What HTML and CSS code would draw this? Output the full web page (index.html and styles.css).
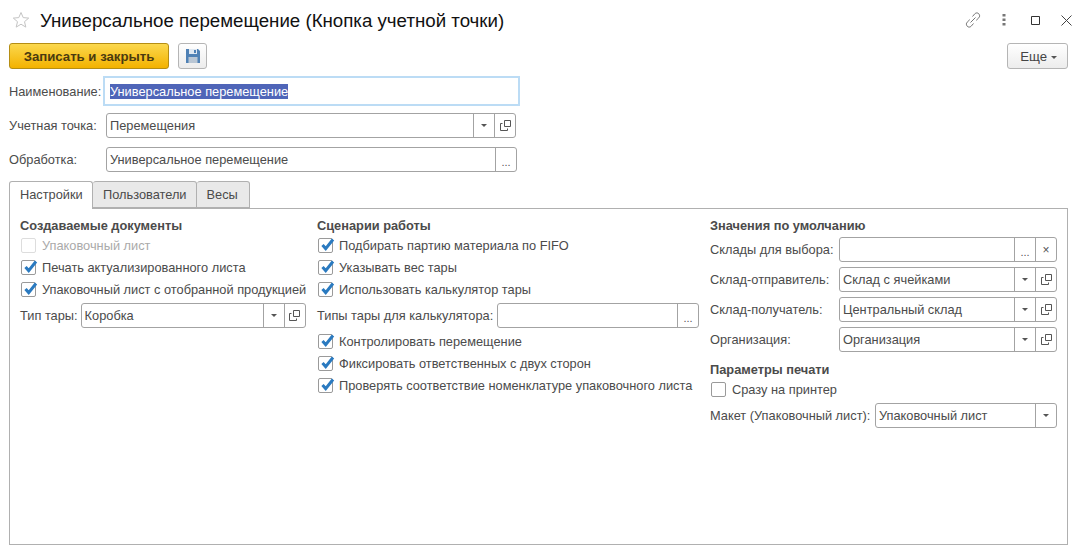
FILE: index.html
```html
<!DOCTYPE html>
<html>
<head>
<meta charset="utf-8">
<title>Универсальное перемещение</title>
<link rel="stylesheet" href="styles.css">
</head>
<body>
<svg class="icon-defs" width="0" height="0">
<symbol id="open" viewBox="0 0 11 11"><path d="M4.500 .5h6v6h-6z M2.500 3.500h-2v7h7v-2" fill="none" stroke="#555"/></symbol>
<symbol id="tick" viewBox="0 0 16 16"><path d="M3.500 8l3.200 3.600L14 2.500" fill="none" stroke="#2a7ac0" stroke-width="3"/></symbol>
</svg>
<div class="title-bar">
  <svg class="star" width="18" height="18" viewBox="0 0 18 18"><path d="M9 1.500l2.200 5.100 5.500.5-4.200 3.600 1.300 5.400L9 13.200l-4.800 2.900 1.300-5.400L1.300 7.100l5.500-.5z" fill="#fff" stroke="#c4c4c4"/></svg>
  <h1 class="title">Универсальное перемещение (Кнопка учетной точки)</h1>
  <div class="window-icons">
    <svg class="icon-link" width="16" height="16" viewBox="0 0 16 16"><path d="M5.500 10.500l5-5M7.500 4.500l2.300-2.700c1.200-1.200 3-1.200 4 0s1.200 2.900 0 4l-2.600 2.600M8.500 11.500l-2.300 2.700c-1.200 1.200-3 1.200-4 0s-1.200-2.900 0-4l2.600-2.600" fill="none" stroke="#777"/></svg>
    <svg class="icon-more" width="4" height="12" viewBox="0 0 4 12"><path d="M.5 0h3v2.500h-3zM.5 4.500h3V7h-3zM.5 9h3v2.500h-3z" fill="#777"/></svg>
    <svg class="icon-max" width="9" height="9" viewBox="0 0 9 9"><path d="M.5.500h8v8h-8z" fill="none" stroke="#333"/></svg>
    <svg class="icon-close" width="11" height="11" viewBox="0 0 11 11"><path d="M.5.500l10 10M10.500.500l-10 10" fill="none" stroke="#444"/></svg>
  </div>
</div>
<div class="toolbar">
  <button class="btn btn-primary">Записать и закрыть</button>
  <button class="btn btn-save">
    <svg width="14" height="14" viewBox="0 0 14 14"><path d="M0 0h12l2 2v12H0z" fill="#4f81b5"/><path d="M3 0h8v5H3z" fill="#dfe8f2"/><path d="M8 1h2v3H8z" fill="#4f81b5"/><path d="M2.500 8h9v6h-9z" fill="#b9c6d4"/></svg>
  </button>
  <button class="btn btn-more">Еще <span class="caret"></span></button>
</div>
<div class="row row-name">
  <label class="row-label">Наименование:</label>
  <div class="name-input"><span class="selected">Универсальное перемещение</span></div>
</div>
<div class="row row-point">
  <label class="row-label">Учетная точка:</label>
  <div class="field field-w410">
    <span class="field-text">Перемещения</span>
    <span class="field-btn"><span class="caret"></span></span>
    <span class="field-btn"><svg width="11" height="11"><use href="#open"/></svg></span>
  </div>
</div>
<div class="row row-proc">
  <label class="row-label">Обработка:</label>
  <div class="field field-w411">
    <span class="field-text">Универсальное перемещение</span>
    <span class="field-btn dots">...</span>
  </div>
</div>
<div class="tabs">
  <div class="tab tab-active">Настройки</div>
  <div class="tab">Пользователи</div>
  <div class="tab">Весы</div>
</div>
<div class="panel">
  <div class="col">
    <h2 class="group-title">Создаваемые документы</h2>
    <div class="check disabled"><span class="box"></span>Упаковочный лист</div>
    <div class="check"><span class="box"><svg width="16" height="16"><use href="#tick"/></svg></span>Печать актуализированного листа</div>
    <div class="check"><span class="box"><svg width="16" height="16"><use href="#tick"/></svg></span>Упаковочный лист с отобранной продукцией</div>
    <div class="field-row field-row-tight">
      <label>Тип тары:</label>
      <div class="field field-w225">
        <span class="field-text">Коробка</span>
        <span class="field-btn"><span class="caret"></span></span>
        <span class="field-btn"><svg width="11" height="11"><use href="#open"/></svg></span>
      </div>
    </div>
  </div>
  <div class="col">
    <h2 class="group-title">Сценарии работы</h2>
    <div class="check"><span class="box"><svg width="16" height="16"><use href="#tick"/></svg></span>Подбирать партию материала по FIFO</div>
    <div class="check"><span class="box"><svg width="16" height="16"><use href="#tick"/></svg></span>Указывать вес тары</div>
    <div class="check"><span class="box"><svg width="16" height="16"><use href="#tick"/></svg></span>Использовать калькулятор тары</div>
    <div class="field-row">
      <label class="label-calc">Типы тары для калькулятора:</label>
      <div class="field field-w202">
        <span class="field-text"></span>
        <span class="field-btn dots">...</span>
      </div>
    </div>
    <div class="check after-field"><span class="box"><svg width="16" height="16"><use href="#tick"/></svg></span>Контролировать перемещение</div>
    <div class="check"><span class="box"><svg width="16" height="16"><use href="#tick"/></svg></span>Фиксировать ответственных с двух сторон</div>
    <div class="check"><span class="box"><svg width="16" height="16"><use href="#tick"/></svg></span>Проверять соответствие номенклатуре упаковочного листа</div>
  </div>
  <div class="col">
    <h2 class="group-title">Значения по умолчанию</h2>
    <div class="form-row first-row">
      <label>Склады для выбора:</label>
      <div class="field">
        <span class="field-text"></span>
        <span class="field-btn dots">...</span>
        <span class="field-btn clear">×</span>
      </div>
    </div>
    <div class="form-row">
      <label>Склад-отправитель:</label>
      <div class="field">
        <span class="field-text">Склад с ячейками</span>
        <span class="field-btn"><span class="caret"></span></span>
        <span class="field-btn"><svg width="11" height="11"><use href="#open"/></svg></span>
      </div>
    </div>
    <div class="form-row">
      <label>Склад-получатель:</label>
      <div class="field">
        <span class="field-text">Центральный склад</span>
        <span class="field-btn"><span class="caret"></span></span>
        <span class="field-btn"><svg width="11" height="11"><use href="#open"/></svg></span>
      </div>
    </div>
    <div class="form-row">
      <label>Организация:</label>
      <div class="field">
        <span class="field-text">Организация</span>
        <span class="field-btn"><span class="caret"></span></span>
        <span class="field-btn"><svg width="11" height="11"><use href="#open"/></svg></span>
      </div>
    </div>
    <h2 class="group-title print-title">Параметры печати</h2>
    <div class="check"><span class="box"></span>Сразу на принтер</div>
    <div class="field-row">
      <label class="label-layout">Макет (Упаковочный лист):</label>
      <div class="field field-fill">
        <span class="field-text">Упаковочный лист</span>
        <span class="field-btn"><span class="caret"></span></span>
      </div>
    </div>
  </div>
</div>
</body>
</html>
```
FILE: styles.css
```css
html, body {
    height: 100%;
}
body {
    margin: 0;
    padding: 0 12px 8px 9px;
    box-sizing: border-box;
    background: #fff;
    font-family: "Liberation Sans", Arial, sans-serif;
    font-size: 12.8px;
    color: #4b4b4b;
    display: flex;
    flex-direction: column;
    overflow: hidden;
}
.icon-defs {
    position: absolute;
}
.title-bar {
    height: 43px;
    display: flex;
    align-items: center;
    flex: none;
}
.star {
    margin-left: 3px;
    margin-right: 10px;
    margin-bottom: 3px;
}
.title {
    margin: 0 0 2px;
    font-size: 18.7px;
    font-weight: normal;
    color: #111;
    flex: 1;
}
.window-icons {
    display: flex;
    align-items: center;
    margin-right: -4px;
    margin-top: -3px;
}
.icon-more {
    margin-left: 21px;
}
.icon-max {
    margin-left: 25px;
}
.icon-close {
    margin-left: 21px;
}
.toolbar {
    display: flex;
    height: 26px;
    gap: 9px;
    flex: none;
}
.btn {
    font-family: inherit;
    font-size: 13.2px;
    padding: 0;
    height: 26px;
    border-radius: 3px;
    border: 1px solid #b5b5b5;
    background: linear-gradient(#fff, #ececec);
    color: #444;
}
.btn-primary {
    width: 160px;
    font-weight: bold;
    color: #4a3a10;
    border-color: #b58e14;
    background: linear-gradient(#fbd84e, #f3b200);
}
.btn-save {
    width: 29px;
    display: flex;
    align-items: center;
    justify-content: center;
}
.btn-more {
    width: 61px;
    margin-left: auto;
    padding-left: 2px;
}
.caret {
    display: inline-block;
    width: 0;
    height: 0;
    border-left: 3px solid transparent;
    border-right: 3px solid transparent;
    border-top: 3px solid #555;
    vertical-align: middle;
}
.row {
    display: flex;
    align-items: center;
    flex: none;
}
.row-label {
    width: 97px;
    flex: none;
}
.row-name {
    margin-top: 7px;
    height: 30px;
}
.row-point {
    margin-top: 7px;
}
.row-proc {
    margin-top: 9px;
}
.name-input {
    width: 417px;
    height: 30px;
    box-sizing: border-box;
    border: 2px solid #bcdcf5;
    padding-left: 5px;
    display: flex;
    align-items: center;
    margin-left: -3px;
}
.selected {
    background: #4f65b8;
    color: #fff;
    line-height: 15px;
}
.field {
    height: 25px;
    box-sizing: border-box;
    border: 1px solid #a3a3a3;
    border-radius: 3px;
    display: flex;
    background: #fff;
    flex: 1;
}
.field-w410 {
    flex: none;
    width: 410px;
}
.field-w411 {
    flex: none;
    width: 411px;
}
.field-w225 {
    flex: none;
    width: 225px;
}
.field-w202 {
    flex: none;
    width: 202px;
}
.field-fill {
    flex: 1;
}
.field-text {
    flex: 1;
    padding-left: 3px;
    line-height: 24px;
    white-space: nowrap;
    overflow: hidden;
}
.field-btn {
    width: 20px;
    border-left: 1px solid #a3a3a3;
    display: flex;
    align-items: center;
    justify-content: center;
    flex: none;
    color: #555;
}
.dots {
    font-size: 11px;
    align-items: flex-end;
    line-height: 18px;
}
.clear {
    font-size: 12px;
}
.tabs {
    display: flex;
    margin-top: 9px;
    height: 27px;
    flex: none;
    position: relative;
    z-index: 1;
}
.tab {
    box-sizing: border-box;
    height: 27px;
    padding: 0 9px 0 10px;
    border: 1px solid #b0b0b0;
    border-left: 0;
    border-radius: 3px 3px 0 0;
    background: #e9e9e9;
    line-height: 26px;
}
.tab:last-child {
    padding-right: 11px;
}
.tab-active {
    width: 84px;
    border-left: 1px solid #b0b0b0;
    border-bottom: 0;
    height: 28px;
    background: #fff;
}
.panel {
    flex: 1;
    border: 1px solid #b0b0b0;
    padding: 9px 10px 0;
    display: grid;
    grid-template-columns: 297px 393px 1fr;
    align-items: start;
}
.col {
    display: flex;
    flex-direction: column;
}
.group-title {
    margin: 0;
    font-size: 12.8px;
    font-weight: bold;
    line-height: 15px;
    height: 16px;
}
.check {
    height: 22px;
    display: flex;
    align-items: center;
    white-space: nowrap;
}
.check.disabled {
    color: #aaa;
}
.box {
    width: 13px;
    height: 13px;
    border: 1px solid #9a9a9a;
    border-radius: 2px;
    margin-left: 1px;
    margin-right: 6px;
    position: relative;
    flex: none;
}
.disabled .box {
    border-color: #ddd;
}
.box svg {
    position: absolute;
    left: 0;
    top: -2px;
}
.field-row {
    display: flex;
    align-items: center;
    gap: 4px;
    margin-top: 3px;
}
.field-row-tight {
    gap: 3px;
}
.label-calc {
    width: 176px;
    white-space: nowrap;
}
.label-layout {
    width: 161px;
    white-space: nowrap;
}
.check.after-field {
    margin-top: 2px;
}
.form-row {
    display: flex;
    align-items: center;
    margin-bottom: 5px;
}
.form-row label {
    width: 129px;
    flex: none;
}
.first-row {
    margin-top: 3px;
}
.print-title {
    margin-top: 5px;
}
```
